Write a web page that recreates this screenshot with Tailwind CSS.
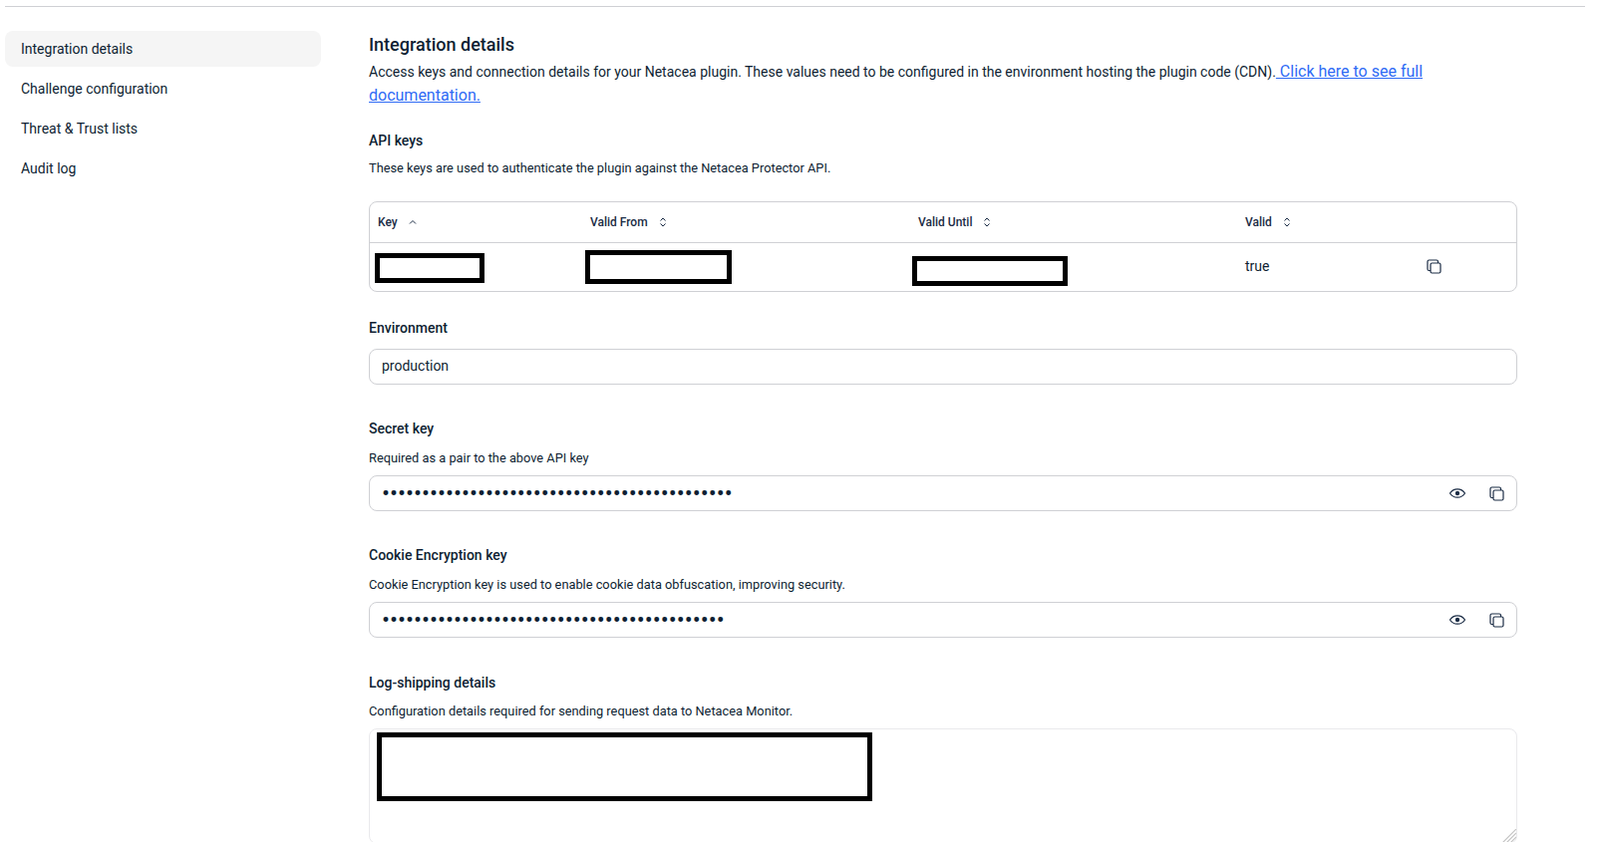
<!DOCTYPE html>
<html lang="en">
<head>
<meta charset="utf-8">
<title>Integration details</title>
<script src="https://cdn.jsdelivr.net/npm/@tailwindcss/browser@4"></script>
</head>
<body class="bg-white">
<div class="h-[845px] overflow-hidden font-['Roboto',sans-serif] text-[#0f1f33]">
  <div class="mt-[6px] ml-[5px] mr-[15px] h-px bg-[#cfd0d4]"></div>
  <div class="flex">
    <nav class="ml-[5px] mt-[24px] w-[317px] shrink-0 flex flex-col gap-1 text-sm">
      <a class="h-9 flex items-center px-4 rounded-lg bg-[#f5f5f5]">Integration details</a>
      <a class="h-9 flex items-center px-4">Challenge configuration</a>
      <a class="h-9 flex items-center px-4">Threat &amp; Trust lists</a>
      <a class="h-9 flex items-center px-4">Audit log</a>
    </nav>
    <main class="ml-[48px] w-[1152px] shrink-0 pt-[24px]">
      <h1 class="text-lg font-medium leading-[28px]">Integration details</h1>
      <p class="mt-[1px] text-sm leading-[24px]">Access keys and connection details for your Netacea plugin. These values need to be configured in the environment hosting the plugin code (CDN).<a class="text-base text-[#2f6bf5] underline"> Click here to see full documentation.</a></p>

      <h2 class="mt-[23px] text-sm font-medium leading-[20px]">API keys</h2>
      <p class="mt-[9px] text-[12.8px] leading-[18px]">These keys are used to authenticate the plugin against the Netacea Protector API.</p>

      <div class="relative mt-[24px] h-[91px] rounded-lg border border-[#cfd0d4]">
        <div class="flex h-[41px] items-center border-b border-[#cfd0d4] text-xs font-medium text-[#1b2c45]">
          <div class="w-[218px] pl-2 flex items-center gap-[10px]">Key
            <svg class="w-[10px] h-[10px]" viewBox="0 0 10 10" fill="none" stroke="currentColor" stroke-width="1"><path d="M2 6.500 5 3.500l3 3"/></svg>
          </div>
          <div class="w-[332px] pl-[3px] flex items-center gap-[10px]">Valid From
            <svg class="w-[10px] h-[12px]" viewBox="0 0 10 12" fill="none" stroke="currentColor" stroke-width="1"><path d="M2.500 4.500 5 2l2.500 2.500M2.500 7.500 5 10l2.500-2.500"/></svg>
          </div>
          <div class="w-[328px] flex items-center gap-[10px]">Valid Until
            <svg class="w-[10px] h-[12px]" viewBox="0 0 10 12" fill="none" stroke="currentColor" stroke-width="1"><path d="M2.500 4.500 5 2l2.500 2.500M2.500 7.500 5 10l2.500-2.500"/></svg>
          </div>
          <div class="flex items-center gap-[10px]">Valid
            <svg class="w-[10px] h-[12px]" viewBox="0 0 10 12" fill="none" stroke="currentColor" stroke-width="1"><path d="M2.500 4.500 5 2l2.500 2.500M2.500 7.500 5 10l2.500-2.500"/></svg>
          </div>
        </div>
        <div class="flex h-[48px] items-center text-sm">
          <div class="w-[878px]"></div>
          <div class="w-[182px] -mt-[3px]">true</div>
          <svg class="w-[15px] h-[15px] -mt-[2px] text-[#1b2c45]" viewBox="0 0 15 15" fill="none" stroke="currentColor" stroke-width="1.2"><rect x="4" y="4" width="10" height="10" rx="1.5"/><path d="M4 11.500H2.500A1.500 1.500 0 0 1 1 10V2.500A1.500 1.500 0 0 1 2.500 1H10a1.500 1.500 0 0 1 1.500 1.500V4"/></svg>
        </div>
        <div class="absolute left-[5px] top-[51px] w-[110px] h-[30px] border-[5px] border-black bg-white"></div>
        <div class="absolute left-[216px] top-[48px] w-[147px] h-[34px] border-[5px] border-black bg-white"></div>
        <div class="absolute left-[544px] top-[54px] w-[156px] h-[30px] border-[5px] border-black bg-white"></div>
      </div>

      <label class="block mt-[26px] text-sm font-medium leading-[20px]">Environment</label>
      <input class="block mt-[11px] w-full h-[36px] rounded-lg border border-[#cfd0d4] px-3 pb-[2px] text-sm outline-none" value="production">

      <label class="block mt-[34px] text-sm font-medium leading-[20px]">Secret key</label>
      <p class="mt-[11px] text-[12.8px] leading-[18px]">Required as a pair to the above API key</p>
      <div class="mt-[8px] h-[36px] rounded-lg border border-[#cfd0d4] flex items-center pr-[12px]">
        <input type="password" class="flex-1 h-full bg-transparent pl-3 text-[23.7px] outline-none" value="12345678901234567890123456789012345678901234">
        <svg class="w-[18px] h-[18px] mr-[23px] text-[#1b2c45]" viewBox="0 0 18 18" fill="none" stroke="currentColor" stroke-width="1.2"><path d="M1.500 9C3.300 6.200 5.900 4.800 9 4.800s5.700 1.400 7.500 4.200c-1.800 2.800-4.400 4.200-7.500 4.200S3.300 11.800 1.500 9Z"/><circle cx="9" cy="9" r="2.200" fill="currentColor" stroke="none"/></svg>
        <svg class="w-[15px] h-[15px] text-[#1b2c45]" viewBox="0 0 15 15" fill="none" stroke="currentColor" stroke-width="1.2"><rect x="4" y="4" width="10" height="10" rx="1.5"/><path d="M4 11.500H2.500A1.500 1.500 0 0 1 1 10V2.500A1.500 1.500 0 0 1 2.500 1H10a1.500 1.500 0 0 1 1.500 1.500V4"/></svg>
      </div>

      <label class="block mt-[34px] text-sm font-medium leading-[20px]">Cookie Encryption key</label>
      <p class="mt-[11px] text-[12.8px] leading-[18px]">Cookie Encryption key is used to enable cookie data obfuscation, improving security.</p>
      <div class="mt-[8px] h-[36px] rounded-lg border border-[#cfd0d4] flex items-center pr-[12px]">
        <input type="password" class="flex-1 h-full bg-transparent pl-3 text-[23.7px] outline-none" value="1234567890123456789012345678901234567890123">
        <svg class="w-[18px] h-[18px] mr-[23px] text-[#1b2c45]" viewBox="0 0 18 18" fill="none" stroke="currentColor" stroke-width="1.2"><path d="M1.500 9C3.300 6.200 5.900 4.800 9 4.800s5.700 1.400 7.500 4.200c-1.800 2.800-4.400 4.200-7.500 4.200S3.300 11.800 1.500 9Z"/><circle cx="9" cy="9" r="2.200" fill="currentColor" stroke="none"/></svg>
        <svg class="w-[15px] h-[15px] text-[#1b2c45]" viewBox="0 0 15 15" fill="none" stroke="currentColor" stroke-width="1.2"><rect x="4" y="4" width="10" height="10" rx="1.5"/><path d="M4 11.500H2.500A1.500 1.500 0 0 1 1 10V2.500A1.500 1.500 0 0 1 2.500 1H10a1.500 1.500 0 0 1 1.500 1.500V4"/></svg>
      </div>

      <label class="block mt-[35px] text-sm font-medium leading-[20px]">Log-shipping details</label>
      <p class="mt-[10px] text-[12.8px] leading-[18px]">Configuration details required for sending request data to Netacea Monitor.</p>
      <div class="relative mt-[8px]">
        <textarea class="block w-full h-[116px] rounded-lg border border-[#e9e9ec] outline-none resize-none bg-white"></textarea>
        <div class="absolute left-[8px] top-[4px] w-[497px] h-[69px] border-[5px] border-black bg-white"></div>
        <svg class="absolute right-[1px] bottom-0 w-[15px] h-[15px] text-[#c4c4c4]" viewBox="0 0 15 15" fill="none" stroke="currentColor" stroke-width="1.2"><path d="M15 0 0 15M15 4 4 15M15 8 8 15"/></svg>
      </div>
    </main>
  </div>
</div>
</body>
</html>
